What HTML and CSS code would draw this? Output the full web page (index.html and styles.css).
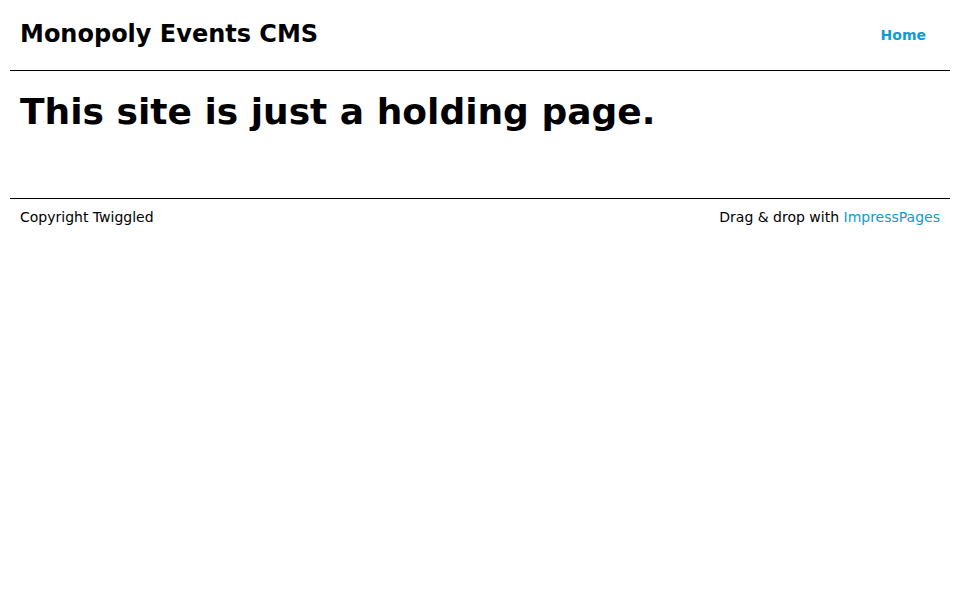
FILE: index.html
```html
<!DOCTYPE html>
<html>
<head>
<meta charset="utf-8">
<title>Monopoly Events CMS</title>
<link rel="stylesheet" href="styles.css">
</head>
<body>
<div class="page">
  <header class="header">
    <div class="logo">Monopoly Events CMS</div>
    <nav class="nav"><a href="#" class="nav-link">Home</a></nav>
  </header>
  <main class="main">
    <h1 class="heading">This site is just a holding page.</h1>
  </main>
  <footer class="footer">
    <div class="copy">Copyright Twiggled</div>
    <div class="powered">Drag &amp; drop with <a href="#" class="footer-link">ImpressPages</a></div>
  </footer>
</div>
</body>
</html>
```

FILE: styles.css
```css
html, body {
  margin: 0;
  padding: 0;
  background: #fff;
}
body {
  font-family: "DejaVu Sans", sans-serif;
  color: #000;
}
.page {
  padding: 0 10px;
}
.header {
  height: 70px;
  border-bottom: 1px solid #000;
  display: flex;
  justify-content: space-between;
  align-items: center;
  padding: 0 10px;
}
.logo {
  font-size: 24px;
  font-weight: bold;
  margin-top: -3px;
}
.nav-link {
  font-size: 14px;
  font-weight: bold;
  color: #0f9bcf;
  text-decoration: none;
  margin-right: 14px;
  position: relative;
  top: -1px;
}
.main {
  height: 127px;
  border-bottom: 1px solid #000;
  padding: 0 10px;
}
.heading {
  margin: 0;
  padding-top: 20px;
  font-size: 36px;
  font-weight: bold;
}
.footer {
  display: flex;
  justify-content: space-between;
  padding: 10px 10px;
  font-size: 14px;
}
.footer-link {
  color: #0f9bcf;
  text-decoration: none;
}
```
